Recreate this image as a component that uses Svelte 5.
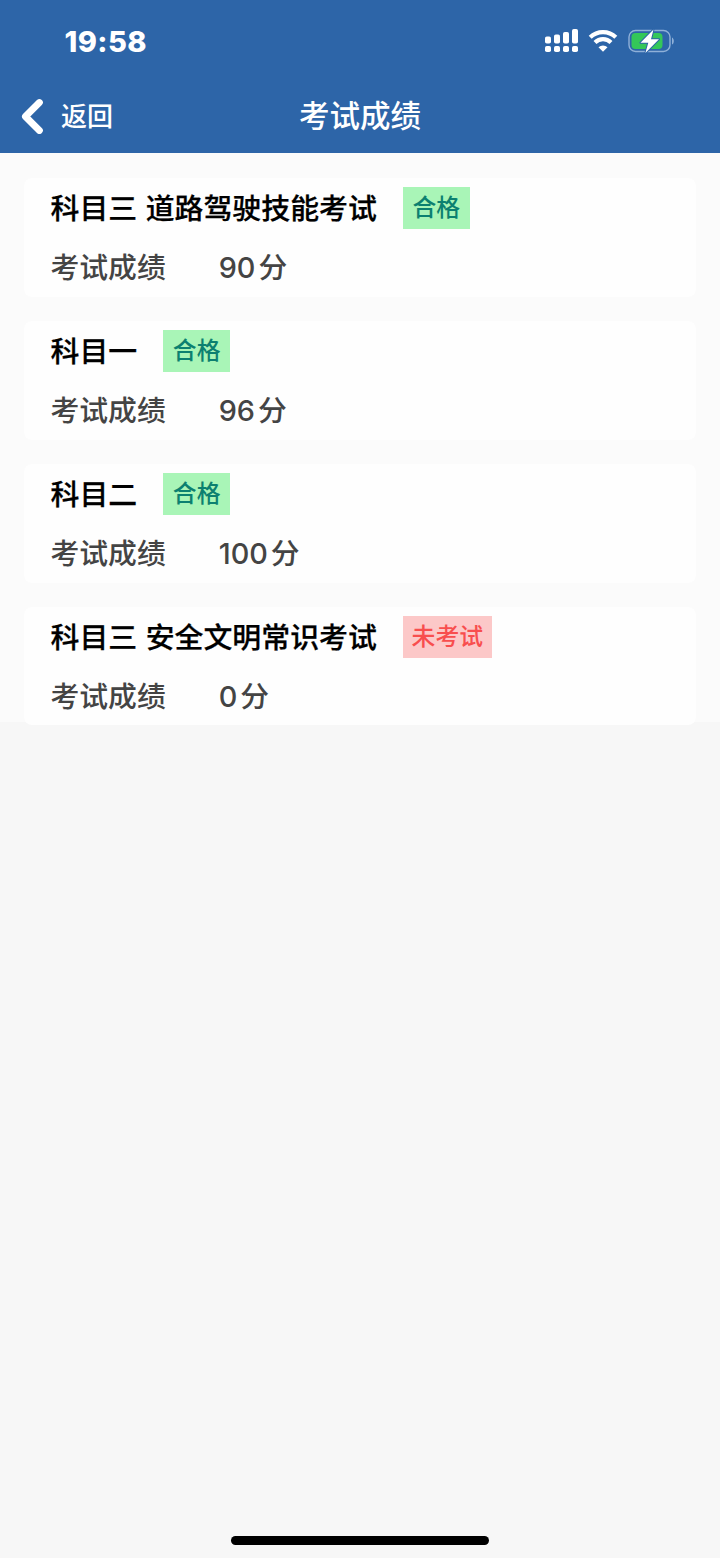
<script lang="ts">
	type Exam = {
		id: number;
		name: string;
		score: number;
		passed: boolean;
	};

	const exams: Exam[] = [
		{ id: 1, name: '科目三 道路驾驶技能考试', score: 90, passed: true },
		{ id: 2, name: '科目一', score: 96, passed: true },
		{ id: 3, name: '科目二', score: 100, passed: true },
		{ id: 4, name: '科目三 安全文明常识考试', score: 0, passed: false }
	];

	// Dual-SIM signal: top row grows, bottom row is plain dots.
	const bars = [
		{ x: 0, h: 7 },
		{ x: 9, h: 9 },
		{ x: 18, h: 11.5 },
		{ x: 27, h: 14.5 }
	];
</script>

<div class="screen">
	<header>
		<div class="status-bar">
			<span class="time">19:58</span>
			<div class="status-icons">
				<svg class="signal" width="33" height="24" viewBox="0 0 33 24" fill="#fff">
					{#each bars as bar (bar.x)}
						<rect x={bar.x} y={14.5 - bar.h} width="6" height={bar.h} rx="1.8" />
						<rect x={bar.x} y="17" width="6" height="6" rx="1.8" />
					{/each}
				</svg>
				<svg class="wifi" width="30" height="24" viewBox="0 0 30 24" fill="none" stroke="#fff" stroke-width="4.2">
					<path d="M2.2 8.3a18.2 18.2 0 0 1 25.6 0" />
					<path d="M7 13.4a11.4 11.4 0 0 1 16 0" />
					<path d="M10.5 18.2a6.5 6.5 0 0 1 9 0L15 22.7z" fill="#fff" stroke="none" />
				</svg>
				<svg class="battery" width="47" height="26" viewBox="0 0 47 26">
					<rect x="1" y="2.5" width="41" height="21" rx="6.5" fill="none" stroke="#8fb0d8" stroke-width="1.4" />
					<rect x="3.5" y="5" width="31" height="16" rx="4" fill="#34c759" />
					<path d="M44 9.5c2.4 1 2.4 6 0 7z" fill="#8fb0d8" />
					<path
						d="M25.5 1.5 12.5 14.8h7.8L17.4 25 31 11.2h-8z"
						fill="#fff"
						stroke="#2d65a8"
						stroke-width="2"
						stroke-linejoin="round"
						paint-order="stroke"
					/>
				</svg>
			</div>
		</div>
		<nav>
			<button class="back" type="button">
				<svg width="22" height="36" viewBox="0 0 22 36" fill="none">
					<path d="M18.4 4.5 4.4 18.5l14 14" stroke="#fff" stroke-width="6.8" stroke-linecap="round" stroke-linejoin="round" />
				</svg>
				<span>返回</span>
			</button>
			<h1>考试成绩</h1>
		</nav>
	</header>

	<main>
		{#each exams as exam (exam.id)}
			<section class="card">
				<div class="title-row">
					<h2>{exam.name}</h2>
					<span class="tag" class:pending={!exam.passed}>{exam.passed ? '合格' : '未考试'}</span>
				</div>
				<div class="score-row">
					<span class="label">考试成绩</span>
					<span class="score">{exam.score}</span>
					<span>分</span>
				</div>
			</section>
		{/each}
	</main>

	<div class="home-indicator"></div>
</div>

<style>
	:global(body) {
		margin: 0;
	}

	.screen {
		display: flex;
		flex-direction: column;
		width: 720px;
		height: 1558px;
		background: #f7f7f7;
		font-family: Inter, 'Noto Sans CJK SC', sans-serif;
		font-weight: 500;
		color: #000;
	}

	header {
		box-sizing: border-box;
		height: 153px;
		background: #2d65a8;
		color: #fff;
	}

	.status-bar {
		display: flex;
		justify-content: space-between;
		align-items: center;
		height: 82px;
		padding: 0 45px 0 64.5px;
	}

	.time {
		font-size: 29px;
		font-weight: 800;
		letter-spacing: 0.4px;
	}

	.status-icons {
		display: flex;
		align-items: center;
	}

	.wifi {
		margin: 0 10px 0 10px;
	}

	nav {
		display: grid;
		grid-template-columns: 1fr auto 1fr;
		align-items: center;
		height: 68px;
	}

	.back {
		display: flex;
		align-items: center;
		gap: 18px;
		padding: 0 0 0 21px;
		border: 0;
		background: none;
		color: inherit;
		font: inherit;
		font-size: 26px;
		line-height: 36px;
	}

	.back span {
		padding-top: 2px;
	}

	h1 {
		margin: 0;
		font-size: 30.5px;
		font-weight: 500;
		line-height: 44px;
	}

	main {
		display: flex;
		flex-direction: column;
		gap: 24px;
		height: 544px;
		padding: 25px 24px 0;
		background: #fbfbfb;
	}

	.card {
		box-sizing: border-box;
		flex: none;
		height: 119px;
		padding: 9px 26.5px 0;
		border-radius: 8px;
		background: #fefefe;
	}

	.card:last-child {
		height: 118px;
	}

	.title-row {
		display: flex;
		align-items: center;
		gap: 26px;
		height: 42px;
	}

	h2 {
		margin: 0;
		padding-top: 1px;
		font-size: 28.9px;
		font-weight: 500;
		line-height: 42px;
		word-spacing: 0.8px;
		-webkit-text-stroke: 0.25px #000;
	}

	.tag {
		padding: 0 9.7px;
		background: #a9f5b7;
		color: #0c8070;
		font-size: 23.8px;
		line-height: 42px;
	}

	.tag.pending {
		padding: 0 8.8px;
		background: #fcc8c8;
		color: #f84e4e;
	}

	.score-row {
		display: flex;
		align-items: center;
		height: 42px;
		margin-top: 18px;
		color: #444;
		font-size: 28.8px;
		line-height: 42px;
	}

	.label {
		margin-right: 53px;
	}

	.score {
		margin-right: 3px;
	}

	.home-indicator {
		width: 258px;
		height: 9px;
		margin: auto auto 13px;
		border-radius: 5px;
		background: #000;
	}
</style>
